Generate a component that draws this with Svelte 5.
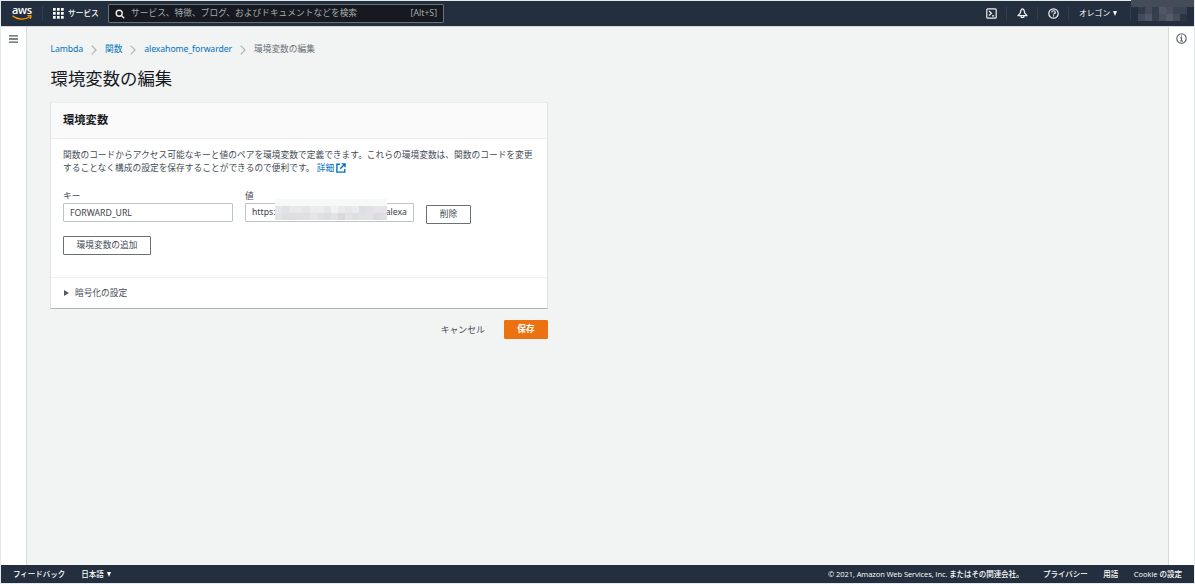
<script lang="ts">
  const crumbs = ['Lambda', '関数', 'alexahome_forwarder'];
  const footerLinks = ['プライバシー', '用語', 'Cookie の設定'];
  const description = [
    '関数のコードからアクセス可能なキーと値のペアを環境変数で定義できます。これらの環境変数は、関数のコードを変更',
    'することなく構成の設定を保存することができるので便利です。'
  ];
  const maskValue = [
    '#e6e6e8', '#dfe1e5', '#e9e8e9', '#e9e9eb', '#e5e5e7', '#ebebec', '#ececec', '#e6e7e9',
    '#f2f1f1', '#ebeaeb', '#e6e5e8', '#e8ecef', '#dedfe4', '#e2e2e5', '#e5e4e8', '#e5e3e6',
    '#e3e3e5', '#dedee1', '#dedee0', '#dfdfe1', '#e0e0e2', '#e5e5e6', '#e0e0e2', '#dddde1',
    '#e2e2e3', '#d9d9dd', '#e2e2e4', '#dedde0', '#e1e1e4', '#e2e1e3', '#dcdce0', '#dfdee1'
  ];
  const maskUser = [
    '#303a49', '#454b5b', '#343d4d', '#535765', '#494f5e', '#3c4554', '#3b4452',
    '#434a5a', '#50566a', '#343e4e', '#4c505e', '#565b6a', '#474d5b', '#2b3645'
  ];
  let key = 'FORWARD_URL';
</script>

<div class="page">
  <header>
    <div class="logo">
      <span>aws</span>
      <svg width="20" height="6" viewBox="0 0 20 6">
        <path d="M.5 .8C5 4.8 12.5 5.2 18 1.8M15.5 .8c2-.5 3.5-.4 3.5.1s-.3 2-1 2.8" fill="none" stroke="#ff9900" stroke-width="1.3" />
      </svg>
    </div>
    <div class="services">
      <svg width="11" height="11" viewBox="0 0 11 11" fill="#fff">
        {#each [0, 4, 8] as y}
          {#each [0, 4, 8] as x}
            <rect {x} {y} width="2.7" height="2.7" />
          {/each}
        {/each}
      </svg>
      サービス
    </div>
    <div class="search">
      <svg width="10" height="10" viewBox="0 0 10 10" fill="none" stroke="#eaeded" stroke-width="1.4">
        <circle cx="4.2" cy="4.2" r="3" /><path d="M6.4 6.4L9.2 9.2" />
      </svg>
      <span class="placeholder">サービス、特徴、ブログ、およびドキュメントなどを検索</span>
      <span>[Alt+S]</span>
    </div>
    <div class="tools">
      <div class="tool">
        <svg width="11" height="11" viewBox="0 0 11 11" fill="none" stroke="#eef0f2" stroke-width="1.2">
          <rect x=".8" y=".8" width="9.4" height="9.4" rx="1" /><path d="M3 3l2.5 2.2L3 7.5M6 7.9h2.2" />
        </svg>
      </div>
      <div class="tool">
        <svg width="11" height="11" viewBox="0 0 11 11" fill="none" stroke="#eef0f2" stroke-width="1.2" stroke-linejoin="round">
          <path d="M5.5 .8C3.8 1.4 3.5 3 3.4 4.8L1 7.7H10L7.6 4.8C7.5 3 7.2 1.4 5.5 .8zM4.2 8v1.5h2.6V8" />
        </svg>
      </div>
      <div class="tool">
        <svg width="11" height="11" viewBox="0 0 11 11" fill="none" stroke="#eef0f2" stroke-width="1.2">
          <circle cx="5.5" cy="5.5" r="4.7" /><path d="M3.8 4.5c0-2.3 3.5-2.3 3.5-.1 0 1.2-1.8 1.2-1.8 2.2M5.5 7.3v1.2" />
        </svg>
      </div>
      <div class="region">オレゴン <i class="down"></i></div>
      <div class="user">
        <div class="user-mask">
          {#each maskUser as color}<b style="background: {color}"></b>{/each}
        </div>
      </div>
    </div>
  </header>

  <div class="body">
    <aside class="left">
      <svg width="9" height="8" viewBox="0 0 9 8" stroke="#545b64" stroke-width="1.3"><path d="M0 .9h9M0 4h9M0 7.1h9" /></svg>
    </aside>
    <main>
      <nav>
        {#each crumbs as crumb}
          <a href="#top">{crumb}</a>
          <svg width="6" height="10" viewBox="0 0 6 10" fill="none" stroke="#aab7b8" stroke-width="1.2"><path d="M.7 .7L5 5L.7 9.3" /></svg>
        {/each}
        <span>環境変数の編集</span>
      </nav>
      <h1>環境変数の編集</h1>
      <section class="card">
        <h2>環境変数</h2>
        <div class="content">
          <p>
            {description[0]}<br />{description[1]}
            <a href="#top">詳細<svg width="10" height="10" viewBox="0 0 10 10" fill="none" stroke="#0073bb" stroke-width="1.4"><path d="M4 1.2H.9v7.9h7.9V6M5.7 .9h3.4v3.4M9 1L4.2 5.8" /></svg></a>
          </p>
          <div class="pair">
            <div class="field">
              <label for="key">キー</label>
              <input id="key" bind:value={key} />
            </div>
            <div class="field">
              <span class="label">値</span>
              <div class="value">
                <span>https:</span><span>alexa</span>
                <div class="mask">
                  {#each maskValue as color}<b style="background: {color}"></b>{/each}
                </div>
              </div>
            </div>
            <button class="remove">削除</button>
          </div>
          <button class="add">環境変数の追加</button>
        </div>
        <div class="expand"><i class="right-arrow"></i>暗号化の設定</div>
      </section>
      <div class="actions">
        <button class="cancel">キャンセル</button>
        <button class="save">保存</button>
      </div>
    </main>
    <aside class="right">
      <svg width="11" height="11" viewBox="0 0 11 11" fill="none" stroke="#545b64" stroke-width="1.1">
        <circle cx="5.5" cy="5.5" r="4.7" /><path d="M5.5 2.4v1.3M4.3 4.9h1.2v3M4 8h3" />
      </svg>
    </aside>
  </div>

  <footer>
    <span>フィードバック</span>
    <span class="lang">日本語 <i class="down"></i></span>
    <span class="copy">© 2021, Amazon Web Services, Inc. またはその関連会社。</span>
    {#each footerLinks as link}<span class="link">{link}</span>{/each}
  </footer>
</div>

<style>
  :global(body) {
    background: #e3e9e8;
  }

  .page {
    width: 1195px;
    height: 584px;
    padding: 1px;
    display: flex;
    flex-direction: column;
    font-family: "Noto Sans", "Noto Sans CJK JP", sans-serif;
    font-size: 8.7px;
    line-height: 13px;
    color: #444c55;
    white-space: nowrap;
    overflow: hidden;
  }

  .page *, .page {
    box-sizing: border-box;
  }

  svg {
    display: block;
    flex: none;
  }

  button, input {
    font: inherit;
    color: inherit;
    margin: 0;
  }

  a {
    color: #0073bb;
    text-decoration: none;
  }

  header {
    height: 25px;
    flex: none;
    display: flex;
    align-items: center;
    background: #232f3e;
    color: #fff;
  }

  .logo {
    width: 42px;
    height: 15px;
    padding-left: 11px;
    border-right: 1px solid #333e4c;
  }

  .logo span {
    display: block;
    height: 8px;
    font: 600 11px/7px "Open Sans", sans-serif;
    letter-spacing: -0.3px;
  }

  .logo svg {
    margin-top: 1px;
  }

  .services {
    width: 65px;
    padding-left: 10px;
    display: flex;
    align-items: center;
    gap: 4px;
    font-size: 7.7px;
    font-weight: 500;
  }

  .search {
    width: 336px;
    height: 19px;
    padding: 0 6px;
    display: flex;
    align-items: center;
    background: #16191f;
    border: 1px solid #687078;
    border-radius: 1px;
    color: #a2acae;
  }

  .placeholder {
    flex: 1;
    margin-left: 6px;
    font-size: 8.72px;
  }

  .tools {
    margin-left: auto;
    display: flex;
    align-items: center;
    height: 25px;
  }

  .tool {
    width: 31px;
    height: 13px;
    display: flex;
    align-items: center;
    justify-content: center;
    border-right: 1px solid #333e4c;
  }

  .region {
    width: 62px;
    padding-left: 10px;
    font-size: 7.8px;
    border-right: 1px solid #333e4c;
  }

  .down {
    display: inline-block;
    margin-left: 1px;
    border: 2.8px solid transparent;
    border-top: 5px solid #fff;
    border-bottom: 0;
    vertical-align: 0;
  }

  .user {
    width: 63px;
    height: 25px;
    margin-top: -2px;
    border-top: 7px solid #434c57;
  }

  .user-mask, .mask {
    display: grid;
  }

  .user-mask {
    grid-template-columns: repeat(7, 7px);
    grid-auto-rows: 7px;
    margin-left: 7px;
  }

  .body {
    flex: 1;
    display: flex;
    background: #f2f3f3;
    border-top: 1px solid #d5dbdb;
  }

  .left, .right {
    width: 26px;
    background: #fff;
    padding: 8px 0 0 8px;
    border-right: 1px solid #d5dbdb;
  }

  .right {
    padding: 6px 0 0 7px;
    border-right: 0;
    border-left: 1px solid #d5dbdb;
  }

  main {
    flex: 1;
    padding: 16px 0 0 23px;
  }

  nav {
    display: flex;
    align-items: center;
    gap: 8px;
    color: #687078;
    margin-left: 0.6px;
  }

  nav a {
    letter-spacing: -0.1px;
  }

  h1 {
    margin: 10px 0 11px 0.5px;
    font-size: 17.4px;
    line-height: 25px;
    font-weight: 400;
    color: #16191f;
  }

  .card {
    width: 498px;
    height: 207px;
    background: #fff;
    border: 1px solid #dfe3e4;
    border-top-color: #eaeded;
    border-bottom-color: #aab7b8;
  }

  h2 {
    height: 36px;
    margin: 0;
    padding: 0 12px;
    font-size: 11.3px;
    line-height: 34px;
    color: #16191f;
    background: #fafafa;
    border-bottom: 1px solid #eaeded;
  }

  .content {
    height: 138px;
    padding: 10px 12px 0;
  }

  p {
    margin: 0 0 15px;
    font-size: 8.72px;
  }

  p a svg {
    display: inline-block;
    margin-left: 2px;
    vertical-align: -2px;
  }

  .pair {
    display: flex;
    gap: 12px;
  }

  .field {
    width: 170px;
  }

  label, .label {
    display: block;
    height: 13px;
  }

  input, .value {
    width: 100%;
    height: 19px;
    padding: 0 6px;
    background: #fff;
    border: 1px solid #bcc6c7;
    border-radius: 1px;
    color: #3b424a;
  }

  input {
    display: block;
  }

  .value {
    position: relative;
    width: 169px;
    display: flex;
    align-items: center;
    justify-content: space-between;
  }

  /* pixelated cover over the middle of the URL */
  .mask {
    position: absolute;
    left: 29px;
    top: -5px;
    border-top: 7px solid #f7f9f8;
    grid-template-columns: repeat(16, 7px);
    grid-auto-rows: 7px;
  }

  button {
    height: 19px;
    padding: 0;
    line-height: 17px;
    background: #fff;
    border: 1px solid #687078;
    border-radius: 1px;
  }

  .remove {
    width: 45px;
    margin: 15px 0 0 -1px;
  }

  .add {
    width: 88px;
    margin-top: 12px;
  }

  .expand {
    height: 31px;
    padding-left: 13px;
    display: flex;
    align-items: center;
    border-top: 1px solid #eff1f1;
  }

  .right-arrow {
    margin-right: 6px;
    border: 3.5px solid transparent;
    border-left: 5px solid #545b64;
    border-right: 0;
  }

  .actions {
    width: 498px;
    margin-top: 11px;
    display: flex;
    justify-content: flex-end;
    gap: 19px;
  }

  .cancel {
    background: none;
    border: 0;
    font-size: 8.9px;
    line-height: 19px;
  }

  .save {
    width: 44px;
    background: #ec7211;
    border-color: #ec7211;
    color: #fff;
    font-weight: 700;
  }

  footer {
    height: 18px;
    flex: none;
    padding: 0 12px;
    display: flex;
    align-items: center;
    background: #232f3e;
    color: #fff;
    font-family: "Open Sans", "Noto Sans CJK JP", sans-serif;
    font-size: 7.5px;
    font-weight: 500;
  }

  .lang {
    margin-left: 16px;
  }

  .copy {
    margin-left: auto;
    margin-right: 4px;
    letter-spacing: -0.08px;
  }

  .link {
    margin-left: 15.5px;
  }
</style>
